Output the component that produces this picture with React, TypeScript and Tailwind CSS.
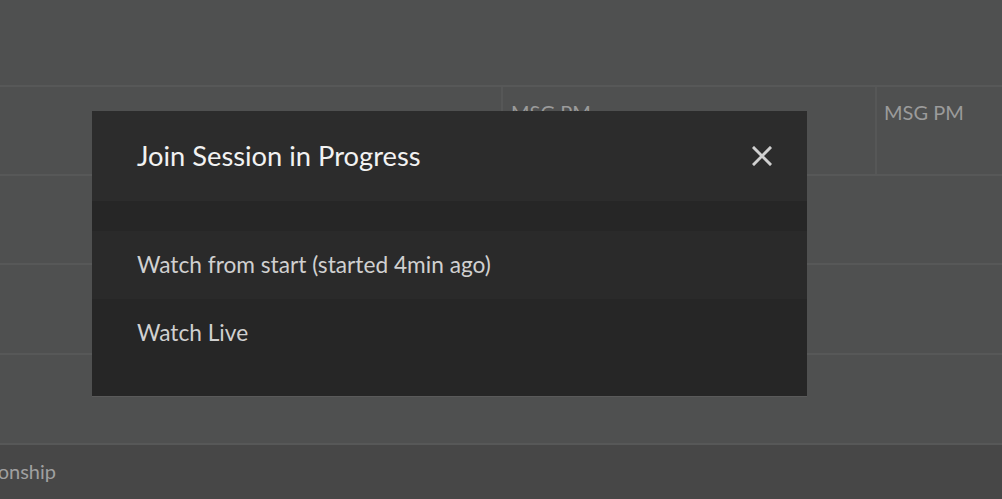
import React from "react";

export default function App() {
  const line = "border-t-2 border-[#575858]";
  return (
    <div className="relative w-[1002px] h-[499px] overflow-hidden bg-[#4f5050] font-['Lato','Noto_Sans',sans-serif]">
      <div className="flex flex-col h-full">
        <div className="h-[85px] shrink-0" />
        <div className={`h-[89px] shrink-0 flex ${line}`}>
          <div className="w-[501px] shrink-0" />
          <div className="w-[374px] shrink-0 border-l-2 border-[#565757] pl-[8px] pt-[13px] text-[20px] leading-[24px] text-[#9b9b9b]">
            MSG PM
          </div>
          <div className="flex-1 border-l-2 border-[#565757] pl-[7px] pt-[13px] text-[20px] leading-[24px] text-[#9b9b9b] whitespace-nowrap">
            MSG PM
          </div>
        </div>
        <div className={`h-[89px] shrink-0 ${line}`} />
        <div className={`h-[90px] shrink-0 ${line}`} />
        <div className={`h-[90px] shrink-0 ${line}`} />
        <div className={`flex-1 bg-[#474747] ${line} flex items-center`}>
          <div className="w-[56px] overflow-hidden flex justify-end whitespace-nowrap text-[20px] leading-[24px] text-[#a0a0a0] mt-[-2px]">
            Championship
          </div>
        </div>
      </div>

      <div className="absolute left-[92px] top-[111px] w-[715px] h-[285px] flex flex-col bg-[#262626] shadow-[0_1px_0_#5a5a5a]">
        <div className="h-[90px] shrink-0 bg-[#2c2c2c] flex items-center justify-between pl-[45px] pr-[35px]">
          <span className="text-[27.3px] leading-[30px] text-[#f2f2f2]">Join Session in Progress</span>
          <svg width="20" height="20" viewBox="0 0 20 20" className="text-[#d0d0d0]">
            <path d="M2 2 L18 18 M18 2 L2 18" stroke="currentColor" strokeWidth="3" strokeLinecap="square" fill="none" />
          </svg>
        </div>
        <div className="h-[30px] shrink-0 bg-[#262626]" />
        <div className="h-[68px] shrink-0 bg-[#2a2a2a] flex items-center pl-[45px] text-[22.7px] leading-[26px] text-[#d0d0d0]">
          Watch from start (started 4min ago)
        </div>
        <div className="h-[68px] shrink-0 bg-[#262626] flex items-center pl-[45px] text-[22.7px] leading-[26px] text-[#d0d0d0]">
          Watch Live
        </div>
      </div>
    </div>
  );
}
